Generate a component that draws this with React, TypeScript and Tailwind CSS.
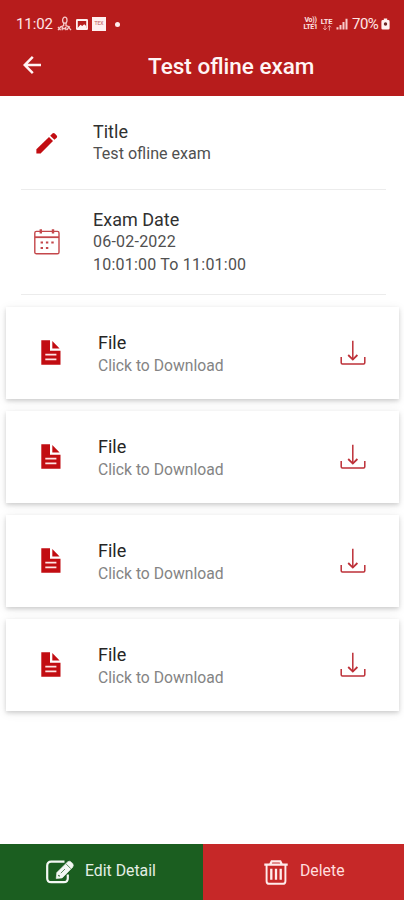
const files = [1, 2, 3, 4];

function PencilIcon() {
  return (
    <svg viewBox="0 0 22 22" className="w-[22px] h-[22px]" fill="#c20d12">
      <path d="M0.4 17.2 L13 4.9 L17 8.9 L4.6 21.4 L0.4 21.6 Z" />
      <path d="M14.2 3.7 L16.4 1.5 Q17.6 0.5 18.8 1.5 L20.7 3.4 Q21.7 4.6 20.7 5.7 L18.4 7.8 Z" />
    </svg>
  );
}

function CalendarIcon() {
  return (
    <svg viewBox="0 0 26 26" className="w-[26px] h-[26px]" fill="none" stroke="#c4474b" strokeWidth="1.4">
      <rect x="0.8" y="2.4" width="24.2" height="22.4" rx="1.6" />
      <path d="M1 8.2H25" strokeWidth="1.8" />
      <path d="M6.8 0.3V4.6M19 0.3V4.6" strokeWidth="2.4" />
      <path d="M6.6 13.6h2.4M11.9 13.6h2.4M17.3 13.6h2.4M6.6 18.9h2.4M11.9 18.9h2.4" strokeWidth="2" />
    </svg>
  );
}

function FileIcon() {
  return (
    <svg viewBox="0 0 20 25" className="mb-[2px] w-5 h-[25px]">
      <path d="M0.3 0.3H9V10.8H19.5V24.7H0.3Z" fill="#c20d12" />
      <path d="M11.3 1V8.5H18.6Z" fill="#c20d12" />
      <path d="M4.3 14.6H15.4M4.3 19.3H15.4" stroke="#ffe3e3" strokeWidth="1.8" />
    </svg>
  );
}

function DownloadIcon() {
  return (
    <svg viewBox="0 0 26 26" className="w-[26px] h-[26px]" fill="none" stroke="#bd3038" strokeWidth="1.5">
      <path d="M12.8 0.8V19.4" />
      <path d="M8.2 15L12.8 19.6L17.4 15" strokeWidth="1.8" />
      <path d="M1.2 17V22.8Q1.2 24 2.4 24H23.6Q24.8 24 24.8 22.8V17" />
    </svg>
  );
}

function EditIcon() {
  return (
    <svg viewBox="0 0 28 24" className="w-7 h-6" fill="none" stroke="#f4f8f4">
      <path d="M18.5 1.7H5.2Q1.2 1.7 1.2 5.7V18.2Q1.2 22.2 5.2 22.2H17.8Q21.8 22.2 21.8 18.2V14.5" strokeWidth="2.2" />
      <path d="M10.2 18.6L10.8 12.6L21.6 1.9Q23.3 0.5 25 1.9L26.8 3.7Q28 5.6 26.6 7.3L16.2 17.9Z" fill="#f4f8f4" strokeWidth="0.6" />
      <path d="M20.2 4.1L24.7 8.5M14.8 13.2L19 9" stroke="#4c7f4f" strokeWidth="0.9" />
      <path d="M12.4 15.2L13.6 16.4" stroke="#1b5e20" strokeWidth="1.2" />
    </svg>
  );
}

function TrashIcon() {
  return (
    <svg viewBox="0 0 25 26" className="w-6 h-[25px]" fill="none" stroke="#ffebeb" strokeWidth="2">
      <path d="M0.3 4.8H24.7M6.5 4.5L8 1.4H17L18.5 4.5" strokeWidth="2.3" />
      <path d="M2.7 5V22Q2.7 24.8 5.5 24.8H19.5Q22.3 24.8 22.3 22V5" />
      <path d="M7.6 9.2V20.6M12.5 9.2V20.6M17.4 9.2V20.6" strokeWidth="2.4" />
    </svg>
  );
}

function StatusBar() {
  return (
    <div className="flex h-[24px] items-center pl-4 pr-[14px] text-[15px] text-[#ffe5e5]">
      <span className="w-[37px] tracking-[-0.1px]">11:02</span>
      <svg viewBox="0 0 16 16" className="ml-1 h-4 w-4" fill="none" stroke="#f6c9c9" strokeWidth="1.3">
        <ellipse cx="7.8" cy="4.2" rx="2.2" ry="3" />
        <path d="M6.7 7V9.6L3 11.2M9 7V9.6L13 11.2" />
        <path d="M1 11L3.6 14.2M3.6 11L1 14.2M5.2 14.2V11.4L7 13L8.8 11.4V14.2M10 14L11.6 11.2L14 14.2" />
      </svg>
      <svg viewBox="0 0 12 11" className="ml-[3px] h-[11px] w-3">
        <rect width="12" height="11" rx="1.2" fill="#fff0f0" />
        <rect x="1.8" y="2" width="8.4" height="7" fill="#b71c1c" />
        <path d="M2 8.5L4.5 5.8L6.2 7L8.2 5.3L10.2 7V9H2Z" fill="#fff0f0" />
      </svg>
      <span className="ml-1 flex h-[14px] w-[14px] items-center justify-center bg-[#fff0f0] text-[5px] font-bold text-[#cf8080]">TEX</span>
      <span className="ml-[9px] h-[5px] w-[5px] rounded-full bg-[#ffeded]" />
      <div className="ml-auto flex items-center">
        <div className="w-[15px] text-center text-[7px] font-bold leading-[7px] tracking-[-0.3px]">
          <div>Vo))</div>
          <div>LTE1</div>
        </div>
        <div className="ml-[2px] flex w-[13px] flex-col items-center text-[7.5px] font-bold leading-[7px] tracking-[-0.2px]">
          <span>LTE</span>
          <svg viewBox="0 0 10 6" className="h-[6px] w-[10px]" fill="none" stroke="#e89a9a">
            <path d="M3 0V5M1.2 3.2L3 5L4.8 3.2M7.4 5.5V0.6M5.8 2.3L7.4 0.6L9 2.3" />
          </svg>
        </div>
        <svg viewBox="0 0 12 12" className="ml-[3px] h-3 w-3" fill="#f8cccc">
          <path d="M0.5 9.3h2V11.5H0.5ZM3.5 7h2v4.5H3.5ZM6.5 4h2v7.5H6.5ZM9.5 0.8h2v10.7H9.5Z" />
        </svg>
        <span className="ml-[4px] w-[29px] tracking-[-0.5px]">70%</span>
        <svg viewBox="0 0 9 12" className="h-3 w-[9px]">
          <path d="M2.8 0.6H6.2V2H7.2Q8.6 2 8.6 3.4V10.2Q8.6 11.6 7.2 11.6H1.8Q0.4 11.6 0.4 10.2V3.4Q0.4 2 1.8 2H2.8Z" fill="#fff0f0" />
          <circle cx="4.5" cy="6" r="1.7" fill="#6d2626" />
        </svg>
      </div>
    </div>
  );
}

function FileCard() {
  return (
    <div className="flex h-[92px] items-center bg-white pl-[35px] pr-[33px] shadow-[0_2px_4px_rgba(0,0,0,0.15),0_2px_10px_rgba(0,0,0,0.08)]">
      <FileIcon />
      <div className="ml-[37px] flex-1 pt-[2px]">
        <div className="text-lg leading-[23px] text-[#252525]">File</div>
        <div className="text-[15.7px] leading-[23px] text-[#848484]">Click to Download</div>
      </div>
      <DownloadIcon />
    </div>
  );
}

export default function App() {
  return (
    <div className="flex h-[900px] w-[404px] flex-col overflow-hidden bg-white font-[Roboto,sans-serif]">
      <header className="h-24 bg-[#b71c1c] pt-3">
        <StatusBar />
        <div className="mt-3 flex h-9 items-center pl-[23px]">
          <svg viewBox="0 0 18 18" className="mb-[2px] h-[18px] w-[18px]" fill="none" stroke="#fff3f3" strokeWidth="2.5">
            <path d="M18 9H1.8M9.8 0.9L1.7 9L9.8 17.1" />
          </svg>
          <h1 className="ml-[107px] text-[22.5px] font-medium leading-9 text-[#fff5f5]">Test ofline exam</h1>
        </div>
      </header>

      <main className="flex-1">
        <section className="ml-[21px] mr-[18px] flex h-[94px] items-center border-b border-[#ececec] pl-[15px]">
          <PencilIcon />
          <div className="ml-[35px]">
            <div className="text-lg leading-[22px] text-[#303030]">Title</div>
            <div className="text-[16.1px] leading-[22px] text-[#505050]">Test ofline exam</div>
          </div>
        </section>
        <section className="ml-[21px] mr-[18px] flex h-[105px] items-center border-b border-[#ececec] pl-[13px]">
          <CalendarIcon />
          <div className="ml-[33px]">
            <div className="text-lg leading-[22px] text-[#303030]">Exam Date</div>
            <div className="text-base leading-[22px] tracking-[0.22px] text-[#505050]">06-02-2022</div>
            <div className="text-base leading-[23px] tracking-[0.22px] text-[#505050]">10:01:00 To 11:01:00</div>
          </div>
        </section>
        <div className="flex flex-col gap-3 pl-[6px] pr-[5px] pt-3">
          {files.map(id => (
            <FileCard key={id} />
          ))}
        </div>
      </main>

      <footer className="flex h-14 text-[15.8px]">
        <button className="flex w-[203px] items-center bg-[#1b5e20] pl-[46px] text-[#e5efe5]">
          <EditIcon />
          <span className="ml-[11px] pb-[3px]">Edit Detail</span>
        </button>
        <button className="flex flex-1 items-center bg-[#c62828] pl-[61px] text-[#ffdede]">
          <TrashIcon />
          <span className="ml-3 pb-[3px]">Delete</span>
        </button>
      </footer>
    </div>
  );
}
